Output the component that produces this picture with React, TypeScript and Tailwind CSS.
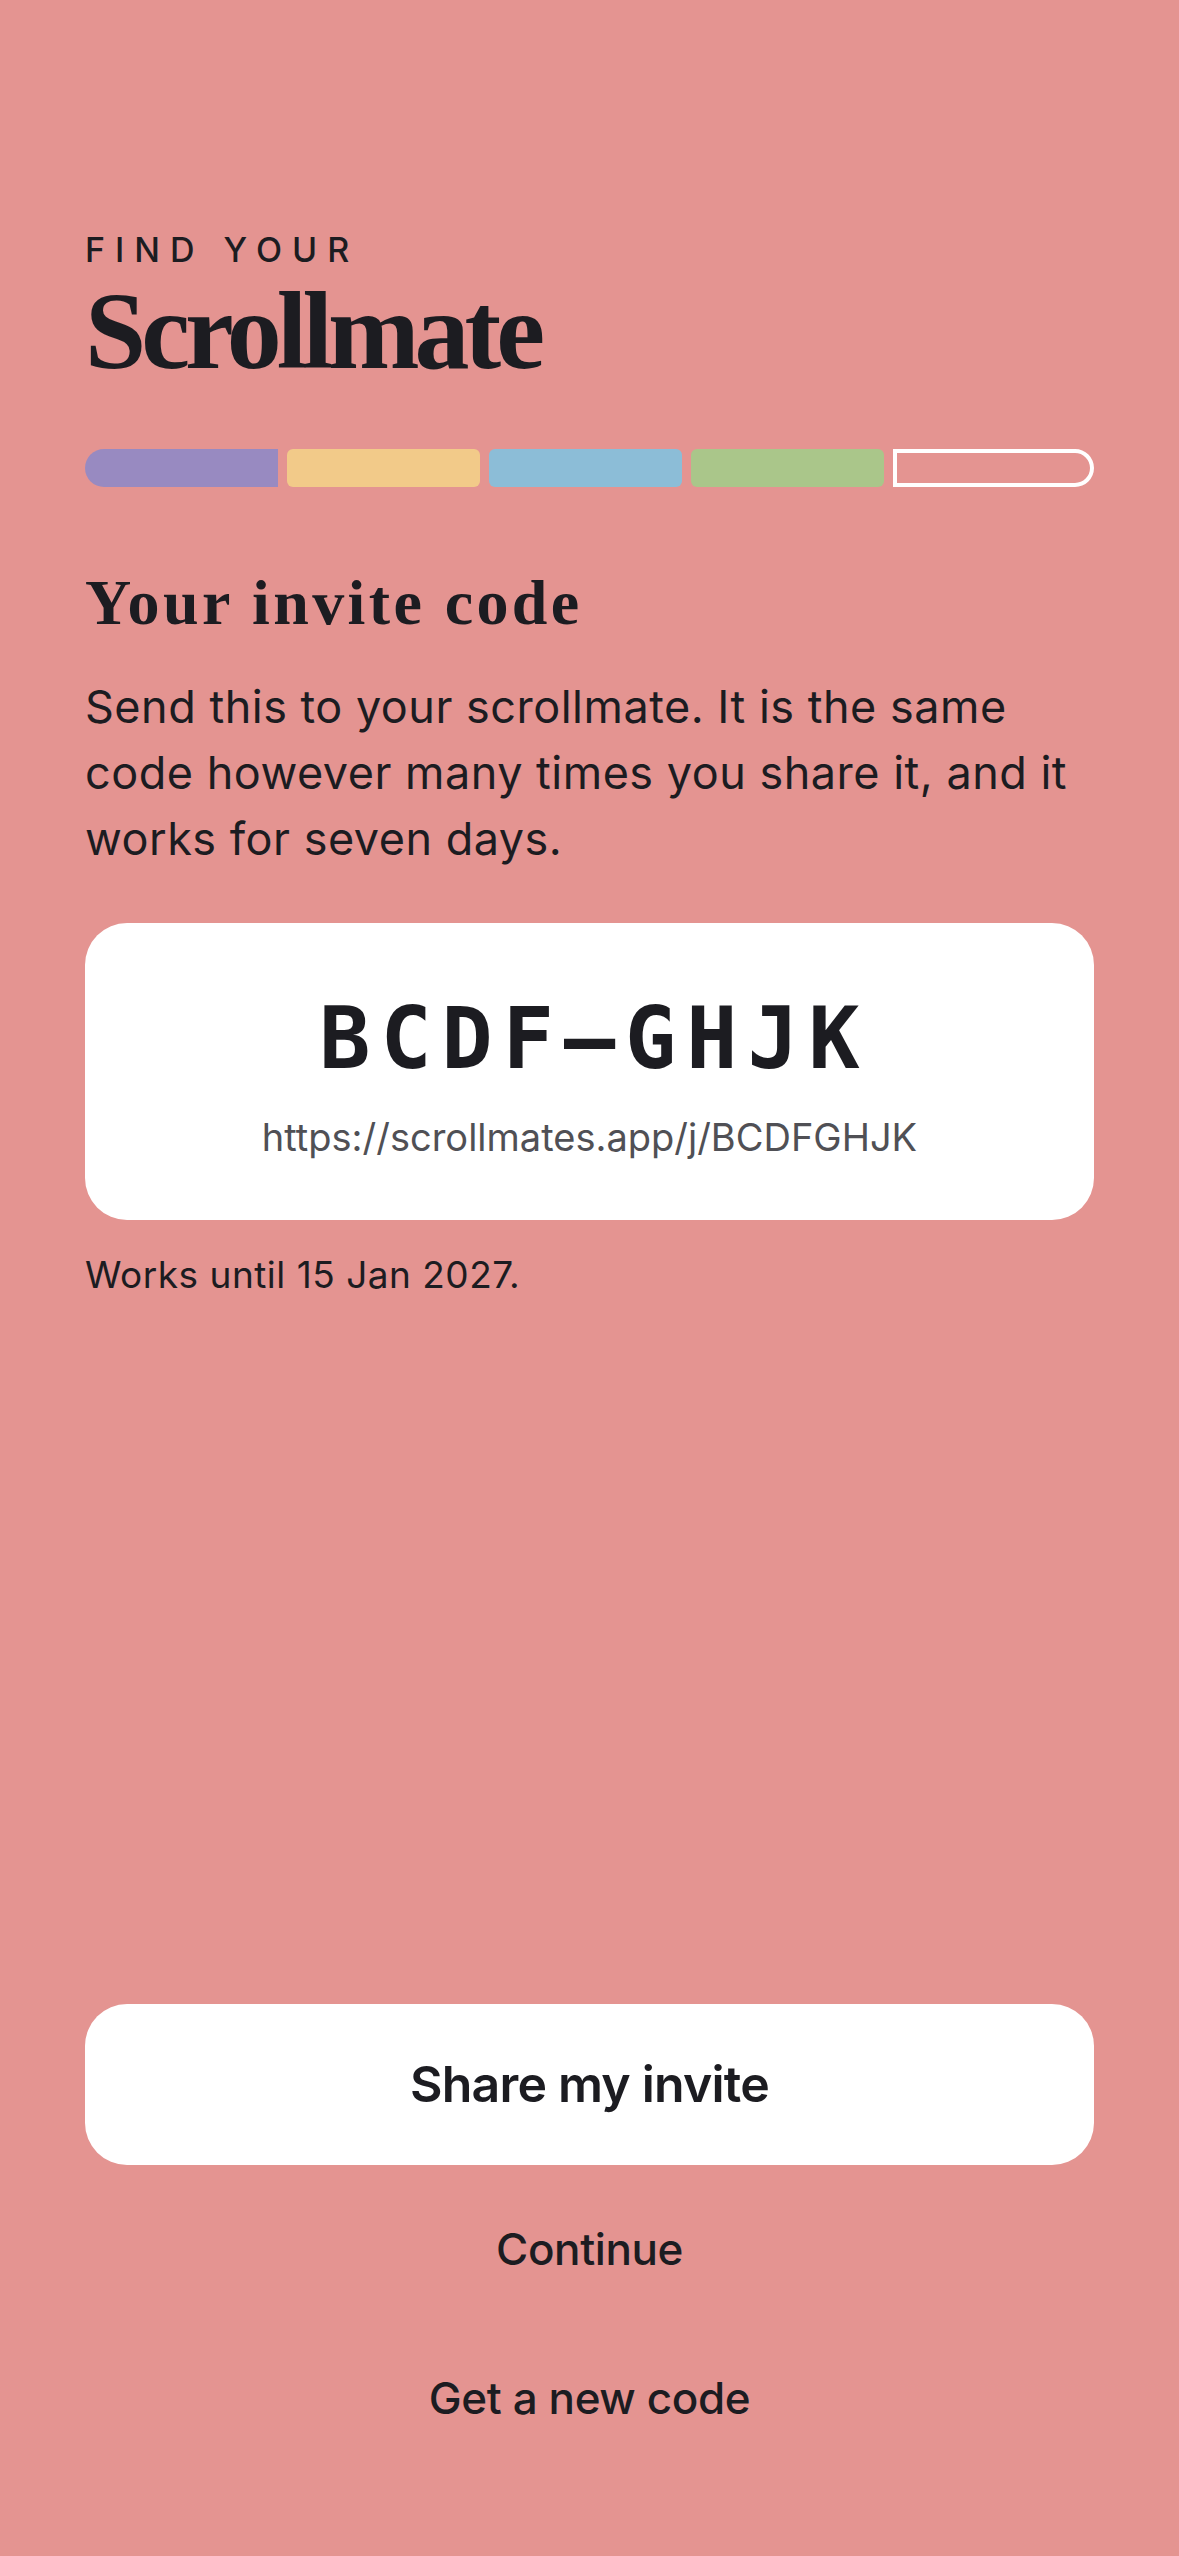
export default function App() {
  const sans = { fontFamily: "Inter, 'Noto Sans', sans-serif" };
  return (
    <div
      className="min-h-[2556px] w-full bg-[#e49491] text-[#1c1c21] flex flex-col px-[85px]"
      style={sans}
    >
      {/* Header */}
      <div className="mt-[233px] text-[34px] leading-[34px] font-medium tracking-[10px]">
        FIND YOUR
      </div>
      <div className="mt-[9px] font-['Liberation_Serif',serif] font-bold text-[110px] leading-[110px] tracking-[-5px]">
        Scrollmate
      </div>

      {/* Progress */}
      <div className="mt-[63px] flex gap-[9px] h-[38px]">
        <div className="flex-1 bg-[#988ac1] rounded-l-full rounded-r-[6px]" />
        <div className="flex-1 bg-[#f2ca89] rounded-[6px]" />
        <div className="flex-1 bg-[#8cbdd7] rounded-[6px]" />
        <div className="flex-1 bg-[#aac68a] rounded-[6px]" />
        <div className="flex-1 border-4 border-white rounded-l-[6px] rounded-r-full" />
      </div>

      {/* Title + copy */}
      <h1 className="mt-[84px] font-['Liberation_Serif',serif] font-bold text-[64px] leading-[64px] tracking-[3.4px]">
        Your invite code
      </h1>
      <p className="mt-[39px] text-[45px] leading-[66px] tracking-[0.5px]">
        Send this to your scrollmate. It is the same code however many times you share it, and it works for seven days.
      </p>

      {/* Code card */}
      <div className="mt-[51px] bg-white rounded-[42px] pt-[73px] pb-[64px] flex flex-col items-center">
        <div className="font-['DejaVu_Sans_Mono',monospace] font-bold text-[85px] leading-[85px] tracking-[10px] pl-[10px]">
          BCDF–GHJK
        </div>
        <div className="mt-[37px] text-[38px] leading-[38px] text-[#505055]">
          https://scrollmates.app/j/BCDFGHJK
        </div>
      </div>
      <div className="mt-[36px] text-[37px] leading-[37px] tracking-[0.5px]">Works until 15 Jan 2027.</div>

      {/* Actions */}
      <div className="mt-auto flex flex-col items-center pb-[136px]">
        <button className="w-full h-[161px] bg-white rounded-[42px] text-[50px] font-semibold tracking-[-0.8px]">
          Share my invite
        </button>
        <button className="mt-[62px] text-[44px] leading-[44px] font-medium tracking-[-0.4px]">
          Continue
        </button>
        <button className="mt-[105px] text-[44px] leading-[44px] font-medium tracking-[-0.4px]">
          Get a new code
        </button>
      </div>
    </div>
  );
}
